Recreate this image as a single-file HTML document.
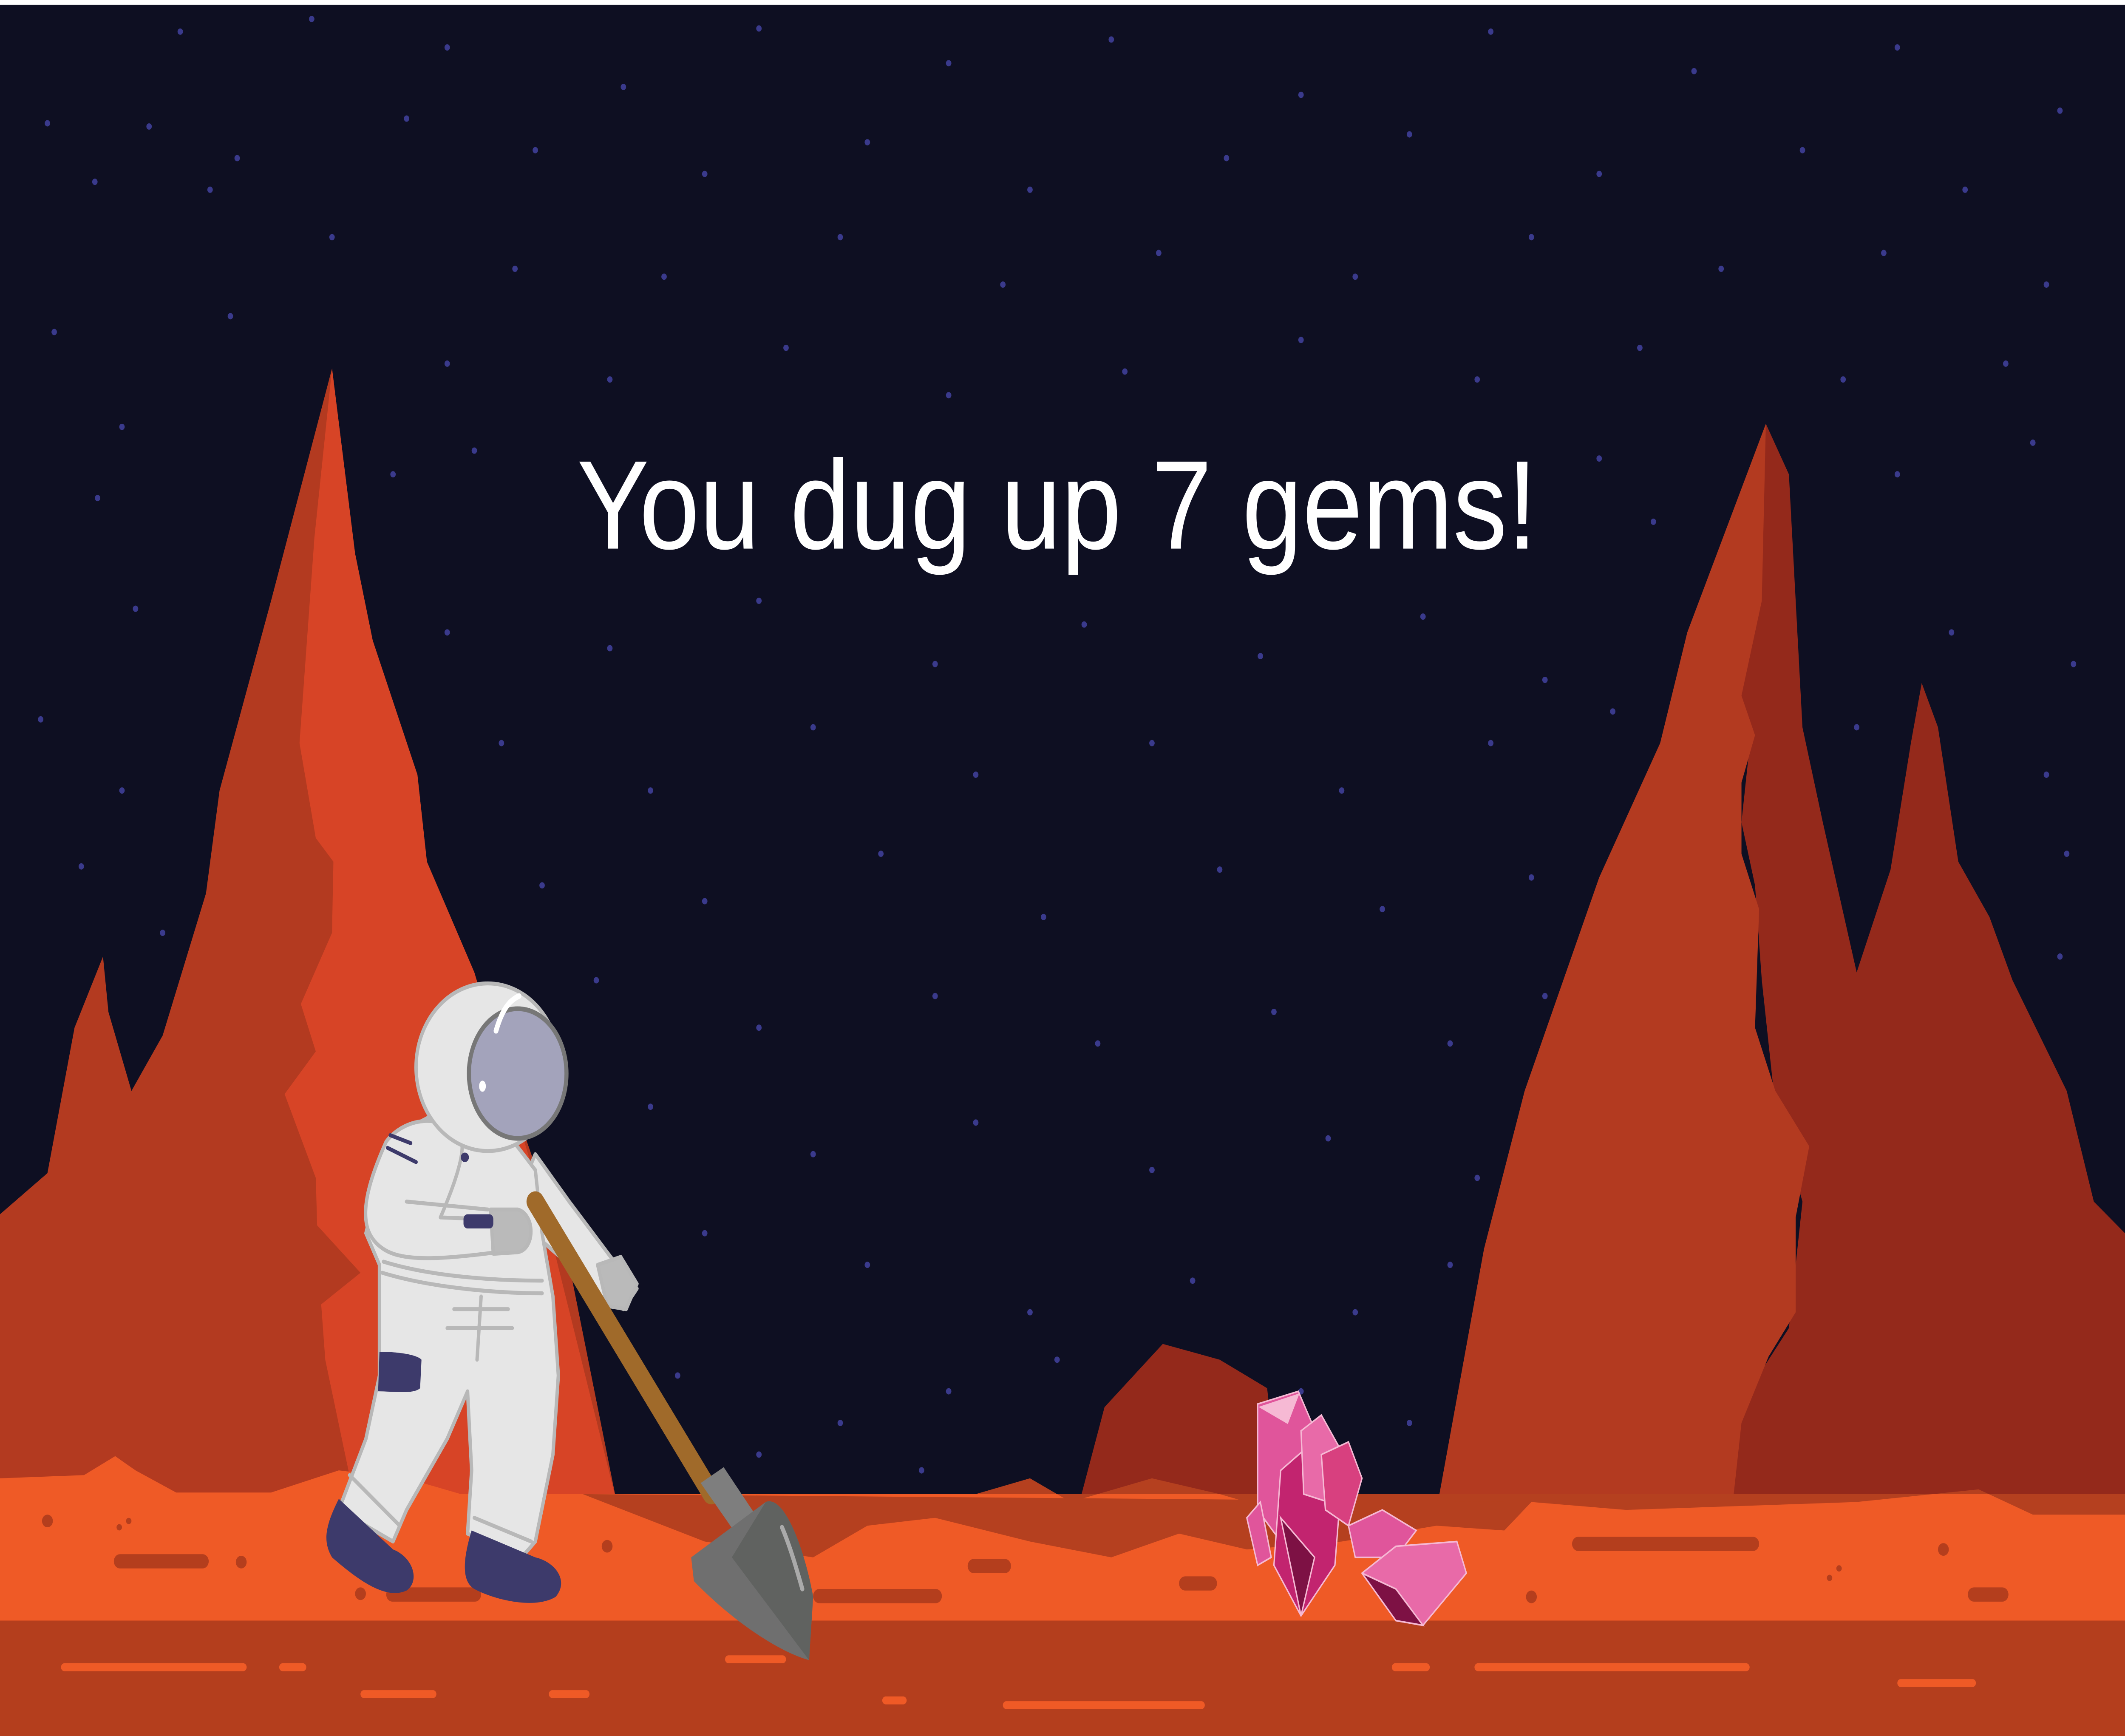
<!DOCTYPE html>
<html><head><meta charset="utf-8"><style>html,body{margin:0;padding:0;width:100%;height:100%;background:#0e0f22;overflow:hidden}svg{display:block;position:fixed;left:0;top:0;width:100vw;height:100vh}</style></head>
<body>
<svg viewBox="0 0 1568 1098" preserveAspectRatio="none" xmlns="http://www.w3.org/2000/svg">
<rect width="1568" height="1098" fill="#0e0f22"/>
<rect width="1568" height="3" fill="#fff"/>
<g fill="#3a3a8c">
<circle cx="133" cy="20" r="2"/><circle cx="230" cy="12" r="2"/><circle cx="330" cy="30" r="2"/><circle cx="460" cy="55" r="2"/><circle cx="560" cy="18" r="2"/><circle cx="700" cy="40" r="2"/><circle cx="820" cy="25" r="2"/><circle cx="960" cy="60" r="2"/><circle cx="1100" cy="20" r="2"/><circle cx="1250" cy="45" r="2"/><circle cx="1400" cy="30" r="2"/><circle cx="1520" cy="70" r="2"/>
<circle cx="35" cy="78" r="2"/><circle cx="110" cy="80" r="2"/><circle cx="175" cy="100" r="2"/><circle cx="300" cy="75" r="2"/><circle cx="395" cy="95" r="2"/><circle cx="520" cy="110" r="2"/><circle cx="640" cy="90" r="2"/><circle cx="760" cy="120" r="2"/><circle cx="905" cy="100" r="2"/><circle cx="1040" cy="85" r="2"/><circle cx="1180" cy="110" r="2"/><circle cx="1330" cy="95" r="2"/><circle cx="1450" cy="120" r="2"/>
<circle cx="70" cy="115" r="2"/><circle cx="155" cy="120" r="2"/><circle cx="245" cy="150" r="2"/><circle cx="380" cy="170" r="2"/><circle cx="490" cy="175" r="2"/><circle cx="620" cy="150" r="2"/><circle cx="740" cy="180" r="2"/><circle cx="855" cy="160" r="2"/><circle cx="1000" cy="175" r="2"/><circle cx="1130" cy="150" r="2"/><circle cx="1270" cy="170" r="2"/><circle cx="1390" cy="160" r="2"/><circle cx="1510" cy="180" r="2"/>
<circle cx="40" cy="210" r="2"/><circle cx="170" cy="200" r="2"/><circle cx="330" cy="230" r="2"/><circle cx="450" cy="240" r="2"/><circle cx="580" cy="220" r="2"/><circle cx="700" cy="250" r="2"/><circle cx="830" cy="235" r="2"/><circle cx="960" cy="215" r="2"/><circle cx="1090" cy="240" r="2"/><circle cx="1210" cy="220" r="2"/><circle cx="1360" cy="240" r="2"/><circle cx="1480" cy="230" r="2"/>
<circle cx="90" cy="270" r="2"/><circle cx="290" cy="300" r="2"/><circle cx="350" cy="285" r="2"/><circle cx="1180" cy="290" r="2"/><circle cx="1400" cy="300" r="2"/><circle cx="1500" cy="280" r="2"/><circle cx="72" cy="315" r="2"/><circle cx="1220" cy="330" r="2"/>
<circle cx="100" cy="385" r="2"/><circle cx="330" cy="400" r="2"/><circle cx="450" cy="410" r="2"/><circle cx="560" cy="380" r="2"/><circle cx="690" cy="420" r="2"/><circle cx="800" cy="395" r="2"/><circle cx="930" cy="415" r="2"/><circle cx="1050" cy="390" r="2"/><circle cx="1140" cy="430" r="2"/><circle cx="1440" cy="400" r="2"/><circle cx="1530" cy="420" r="2"/>
<circle cx="30" cy="455" r="2"/><circle cx="370" cy="470" r="2"/><circle cx="480" cy="500" r="2"/><circle cx="600" cy="460" r="2"/><circle cx="720" cy="490" r="2"/><circle cx="850" cy="470" r="2"/><circle cx="990" cy="500" r="2"/><circle cx="1100" cy="470" r="2"/><circle cx="1190" cy="450" r="2"/><circle cx="1370" cy="460" r="2"/><circle cx="1510" cy="490" r="2"/>
<circle cx="90" cy="500" r="2"/><circle cx="400" cy="560" r="2"/><circle cx="520" cy="570" r="2"/><circle cx="650" cy="540" r="2"/><circle cx="770" cy="580" r="2"/><circle cx="900" cy="550" r="2"/><circle cx="1020" cy="575" r="2"/><circle cx="1130" cy="555" r="2"/><circle cx="1525" cy="540" r="2"/><circle cx="60" cy="548" r="2"/>
<circle cx="120" cy="590" r="2"/><circle cx="440" cy="620" r="2"/><circle cx="560" cy="650" r="2"/><circle cx="690" cy="630" r="2"/><circle cx="810" cy="660" r="2"/><circle cx="940" cy="640" r="2"/><circle cx="1070" cy="660" r="2"/><circle cx="1140" cy="630" r="2"/><circle cx="1520" cy="605" r="2"/>
<circle cx="480" cy="700" r="2"/><circle cx="600" cy="730" r="2"/><circle cx="720" cy="710" r="2"/><circle cx="850" cy="740" r="2"/><circle cx="980" cy="720" r="2"/><circle cx="1090" cy="745" r="2"/><circle cx="520" cy="780" r="2"/><circle cx="640" cy="800" r="2"/><circle cx="760" cy="830" r="2"/><circle cx="880" cy="810" r="2"/><circle cx="1000" cy="830" r="2"/><circle cx="1070" cy="800" r="2"/>
<circle cx="500" cy="870" r="2"/><circle cx="620" cy="900" r="2"/><circle cx="700" cy="880" r="2"/><circle cx="780" cy="860" r="2"/><circle cx="960" cy="880" r="2"/><circle cx="1040" cy="900" r="2"/><circle cx="560" cy="920" r="2"/><circle cx="680" cy="930" r="2"/>
</g>
<text x="780" y="347" text-anchor="middle" font-family="Liberation Sans, sans-serif" font-size="80" fill="#fff">You dug up 7 gems!</text>
<path d="M0,768 L35,742 L55,650 L76,605 L80,640 L97,690 L120,655 L152,565 L162,500 L200,380 L245,233 L262,350 L275,405 L308,490 L315,545 L350,615 L380,700 L420,800 L455,950 L0,950 Z" fill="#b33a20"/>
<path d="M245,233 L262,350 L275,405 L308,490 L315,545 L350,615 L400,760 L455,950 L262,950 L240,860 L237,825 L266,805 L234,775 L233,745 L210,692 L233,665 L222,635 L245,590 L246,545 L233,530 L221,470 L232,340 Z" fill="#d74426"/>
<path d="M1270,950 L1290,880 L1320,840 L1330,760 L1310,700 L1300,620 L1295,560 L1285,520 L1290,480 L1280,440 L1295,380 L1303,268 L1320,300 L1330,460 L1345,520 L1370,615 L1395,550 L1410,470 L1418,432 L1430,460 L1445,545 L1468,580 L1485,620 L1525,690 L1545,760 L1568,780 L1568,950 Z" fill="#94291b"/>
<path d="M1060,955 L1095,790 L1125,690 L1180,555 L1225,470 L1245,400 L1303,268 L1300,380 L1285,440 L1295,465 L1285,495 L1285,540 L1298,575 L1295,650 L1310,690 L1335,725 L1325,770 L1325,830 L1305,858 L1285,900 L1278,955 Z" fill="#b33a20"/>
<path d="M795,955 L815,890 L858,850 L900,860 L935,878 L945,955 Z" fill="#94291b"/>
<path d="M0,935 L62,933 L85,921 L100,930 L130,944 L200,944 L250,930 L300,935 L340,945 L1568,945 L1568,1098 L0,1098 Z" fill="#ef5a26"/>
<path d="M420,945 L720,945 L760,935 L790,950 L850,935 L900,945 L960,960 L1060,950 L1130,950 L1200,955 L1370,950 L1460,942 L1500,958 L1568,958 L1568,945 Z" fill="#b5401f"/>
<path d="M430,945 L520,975 L600,985 L640,965 L690,960 L760,975 L820,985 L870,970 L920,980 L990,975 L1060,965 L1110,968 L1130,950 Z" fill="#b5401f"/>
<rect x="0" y="1025" width="1568" height="73" fill="#b43e1d"/>
<g fill="#b43e1d">
<rect x="84" y="983" width="70" height="9" rx="4.5"/><rect x="285" y="1004" width="70" height="9" rx="4.5"/><rect x="714" y="986" width="32" height="9" rx="4.5"/><rect x="870" y="997" width="28" height="9" rx="4.5"/><rect x="600" y="1005" width="95" height="9" rx="4.5"/><rect x="1160" y="972" width="138" height="9" rx="4.5"/><rect x="1452" y="1004" width="30" height="9" rx="4.5"/>
<circle cx="35" cy="962" r="4"/><circle cx="178" cy="988" r="4"/><circle cx="448" cy="978" r="4"/><circle cx="266" cy="1008" r="4"/><circle cx="1130" cy="1010" r="4"/><circle cx="1434" cy="980" r="4"/><circle cx="88" cy="966" r="2"/><circle cx="95" cy="962" r="2"/><circle cx="1350" cy="998" r="2"/><circle cx="1357" cy="992" r="2"/>
</g>
<g fill="#ef5a26">
<rect x="45" y="1052" width="137" height="5" rx="2.5"/><rect x="206" y="1052" width="20" height="5" rx="2.5"/><rect x="266" y="1069" width="56" height="5" rx="2.5"/><rect x="405" y="1069" width="30" height="5" rx="2.5"/><rect x="535" y="1047" width="45" height="5" rx="2.5"/><rect x="651" y="1073" width="18" height="5" rx="2.5"/><rect x="740" y="1076" width="149" height="5" rx="2.5"/><rect x="1027" y="1052" width="28" height="5" rx="2.5"/><rect x="1088" y="1052" width="203" height="5" rx="2.5"/><rect x="1400" y="1062" width="58" height="5" rx="2.5"/>
</g>
<g stroke="#b8b8b8" stroke-width="2.5" stroke-linejoin="round" stroke-linecap="round">
<path d="M380,760 L395,730 L420,760 L455,800 L470,815 L460,828 L445,822 L420,800 L400,785 Z" fill="#e6e6e6"/>
<path d="M441,800 L458,795 L470,812 L462,828 L448,826 Z" fill="#bababa"/>
<path d="M287,720 L320,705 L370,712 L395,740 L400,780 L408,820 L412,870 L408,920 L395,975 L385,985 L345,970 L348,930 L345,880 L330,910 L300,955 L290,975 L250,955 L270,910 L280,870 L280,800 L270,780 Z" fill="#e6e6e6"/>
<path d="M285,722 C300,705 330,705 340,720 C345,730 330,760 325,770 L385,772 L385,790 C340,795 300,800 283,790 C265,780 265,760 285,722 Z" fill="#e6e6e6"/>
<path d="M362,765 L382,765 C395,768 395,790 382,792 L364,793 Z" fill="#bababa"/>
<circle cx="360" cy="675" r="53" fill="#e6e6e6"/>
<ellipse cx="382" cy="679" rx="36" ry="41" fill="#a3a3bb" stroke="#777" stroke-width="3"/>
<path d="M300,760 L360,765" fill="none"/><path d="M282,805 C320,815 370,818 400,818" fill="none"/><path d="M283,798 C320,808 370,810 400,810" fill="none"/>
<path d="M335,828 L375,828 M330,840 L378,840 M355,820 L352,860" fill="none"/>
<path d="M258,933 L295,965 M350,960 L392,975" fill="none"/>
</g>
<path d="M366,652 C370,640 375,633 383,630" stroke="#fff" stroke-width="3.5" fill="none" stroke-linecap="round"/>
<ellipse cx="356" cy="687" rx="2.5" ry="3.5" fill="#fff"/>
<circle cx="343" cy="732" r="3" fill="#3d3a6b"/>
<path d="M288,718 L303,723 M286,726 L307,735" stroke="#3d3a6b" stroke-width="2.5" stroke-linecap="round"/>
<rect x="342" y="768" width="22" height="9" rx="3" fill="#3d3a6b"/>
<path d="M280,855 C295,855 308,857 311,860 L310,878 C305,882 290,880 279,880 Z" fill="#3d3a6b"/>
<path d="M250,948 L290,980 C305,985 310,1000 300,1006 C285,1012 265,1000 245,985 C238,975 240,965 250,948 Z" fill="#3d3a6b"/>
<path d="M348,968 L395,985 C410,988 420,1000 410,1010 C395,1018 365,1012 350,1005 C340,1000 342,985 348,968 Z" fill="#3d3a6b"/>
<path d="M395,760 L525,945" stroke="#a06a2a" stroke-width="13" stroke-linecap="round"/>
<path d="M517,938 L534,928 L562,964 L547,975 Z" fill="#7e7e7e"/>
<path d="M510,985 L565,950 C580,945 595,985 600,1010 L597,1050 C575,1045 540,1025 512,1000 Z" fill="#6f6f6f"/>
<path d="M540,985 L597,1050 L600,1010 C595,985 580,945 565,950 Z" fill="#606260"/>
<path d="M577,966 C583,978 588,993 592,1005" stroke="#aaa" stroke-width="3" stroke-linecap="round"/>
<g stroke="#f6b9d4" stroke-width="1">
<path d="M928,888 L958,880 L968,900 L965,950 L945,975 L928,955 Z" fill="#e0559b"/>
<path d="M945,930 L965,915 L990,935 L985,990 L960,1022 L940,990 Z" fill="#c2246f"/>
<path d="M960,905 L975,895 L988,915 L980,950 L962,945 Z" fill="#e86aa8"/>
<path d="M975,920 L995,912 L1005,935 L995,965 L978,955 Z" fill="#d8407f"/>
<path d="M920,960 L930,950 L938,985 L928,990 Z" fill="#e0559b"/>
<path d="M995,965 L1020,955 L1045,968 L1030,985 L1000,985 Z" fill="#e0559b"/>
<path d="M1005,995 L1030,978 L1075,975 L1082,995 L1050,1028 L1030,1025 Z" fill="#e86aa8"/>
<path d="M1005,995 L1030,1025 L1050,1028 L1030,1005 Z" fill="#7d1144"/>
<path d="M945,960 L960,1022 L970,985 Z" fill="#7d1144"/>
<path d="M930,890 L958,882 L950,900 Z" fill="#f6b9d4"/>
</g>
</svg>
</body></html>
